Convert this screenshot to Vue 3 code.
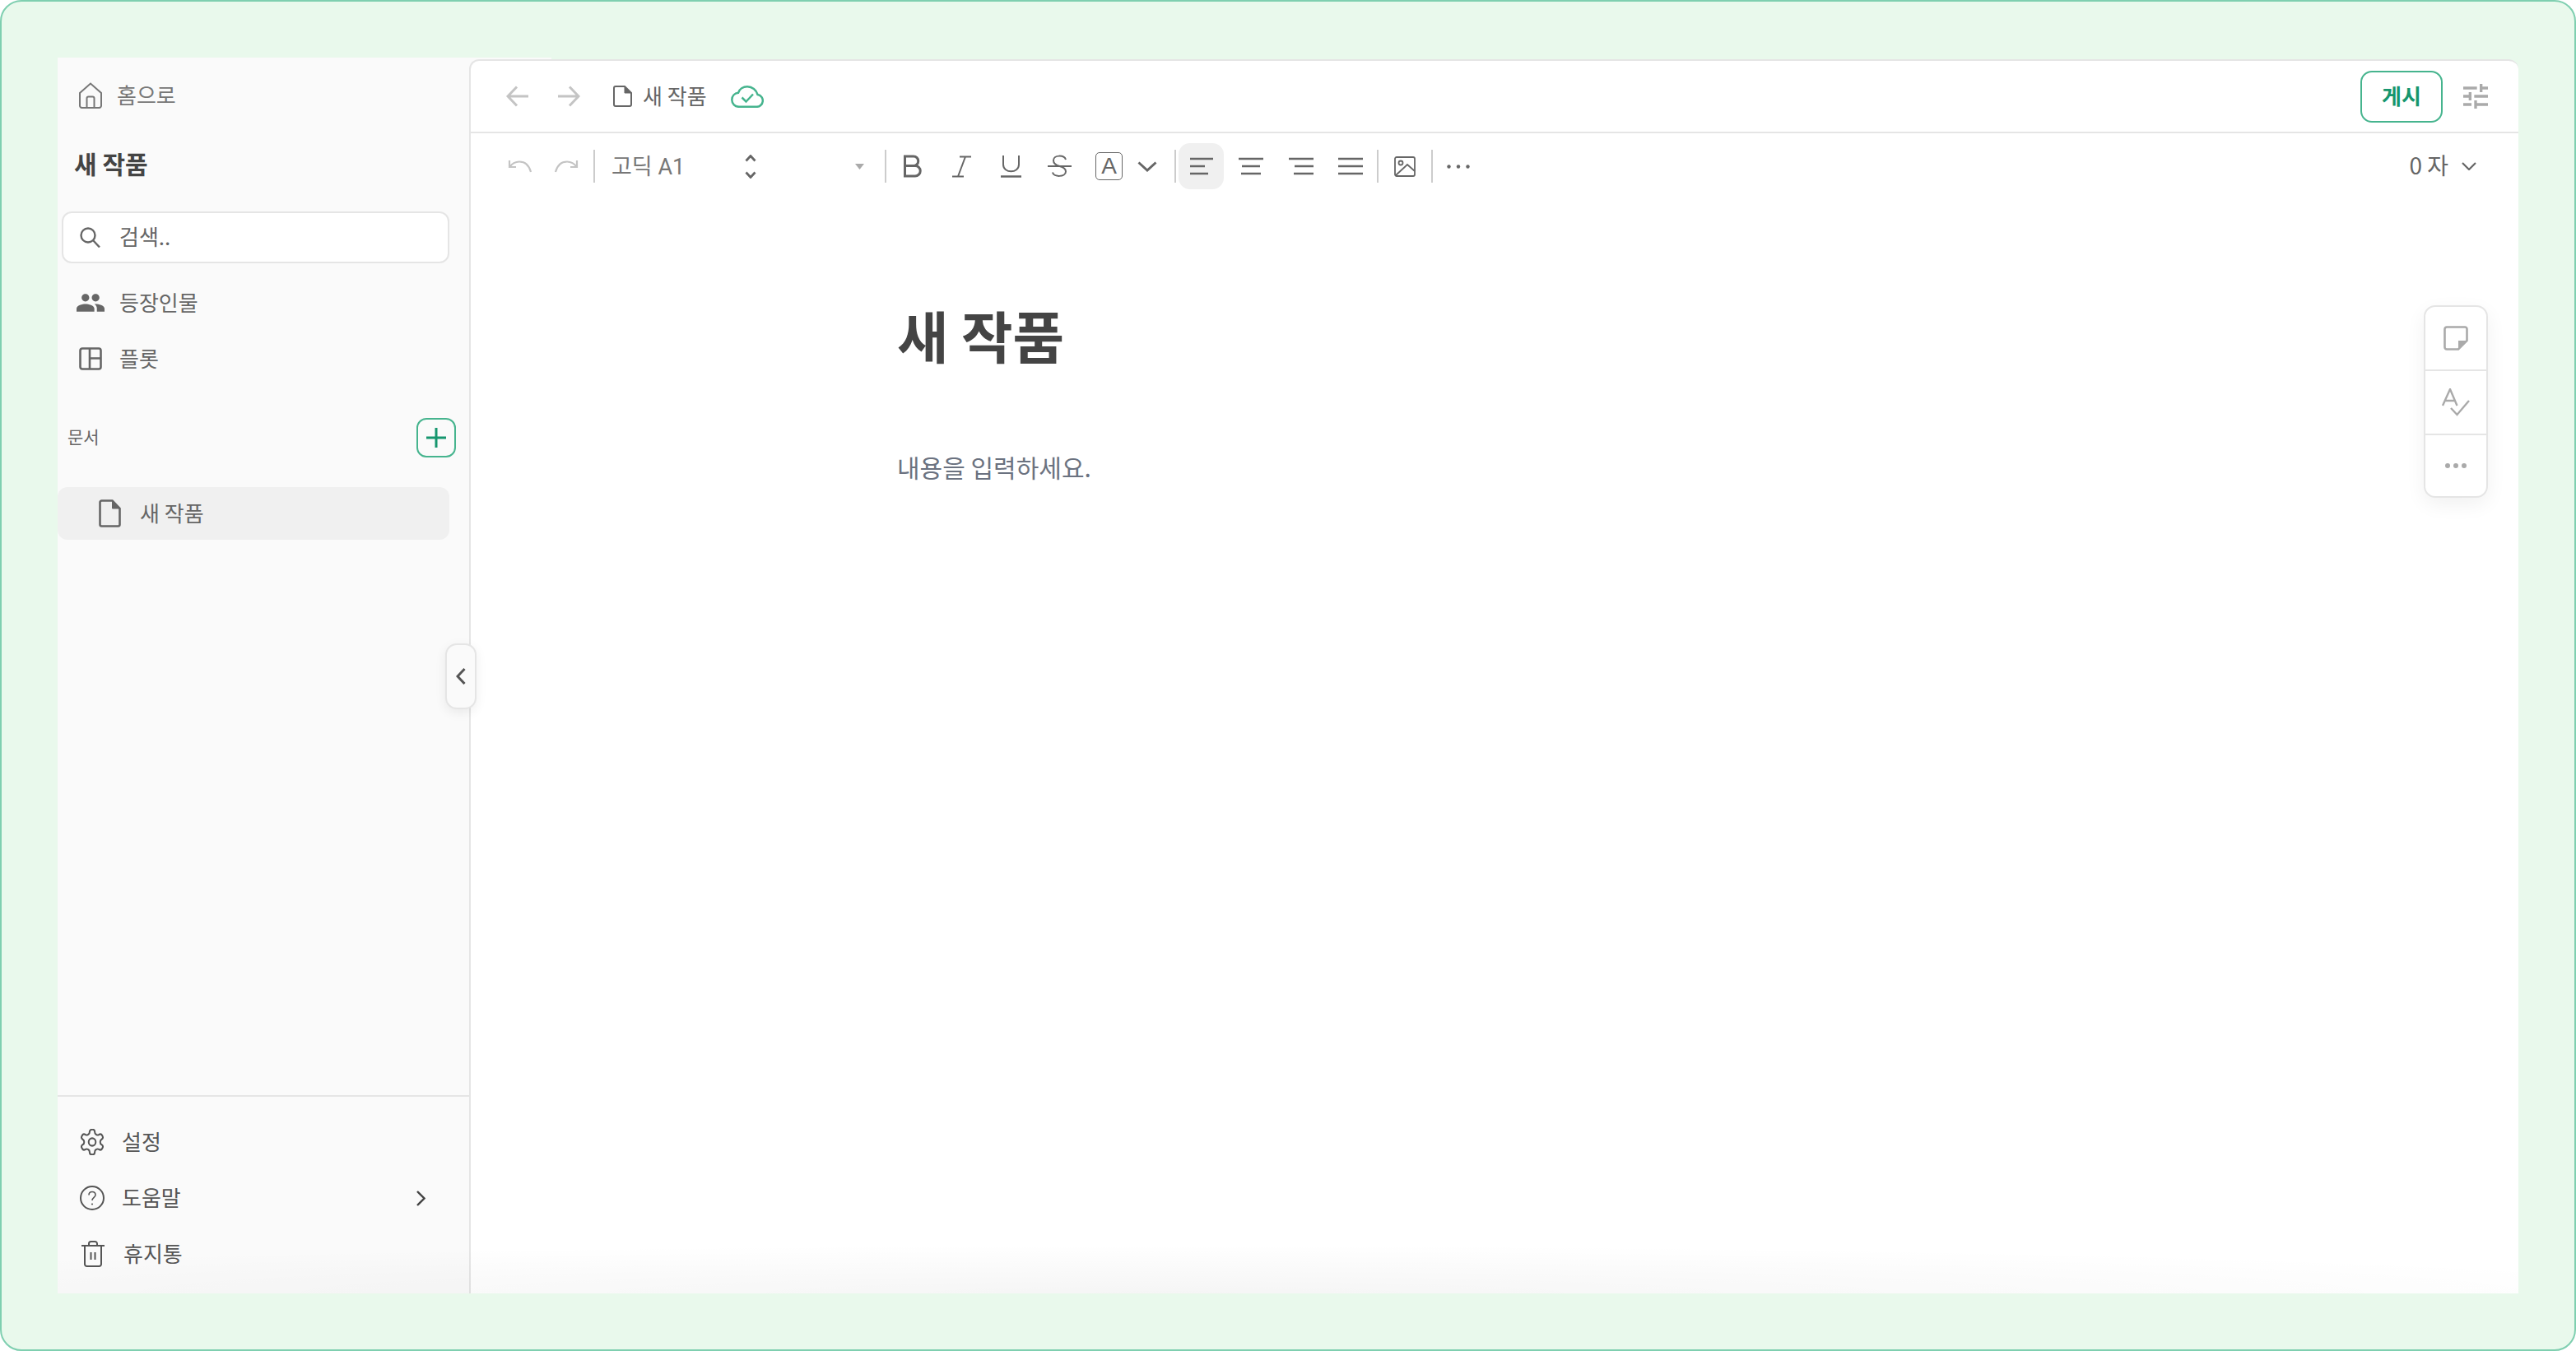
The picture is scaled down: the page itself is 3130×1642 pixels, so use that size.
<script setup>
const alignRows = [
  { name: 'left', on: true, d: 'M1 2h28M1 11h18M1 20h22' },
  { name: 'center', on: false, d: 'M0 2h30M4 11h22M3 20h24' },
  { name: 'right', on: false, d: 'M0 2h30M7 11h23M6 20h24' },
  { name: 'justify', on: false, d: 'M0 2h30M0 11h30M0 20h30' },
]
</script>

<template>
  <div class="window">
    <div class="frame">
      <aside class="sidebar">
        <div class="side-top">
          <a class="home">
            <svg width="30" height="32" viewBox="0 0 30 32" fill="none" stroke="#777" stroke-width="2"><path d="M2 13 15 1.500 28 13v15.500a2.500 2.500 0 0 1-2.500 2.500h-21A2.500 2.500 0 0 1 2 28.500zM10.500 31V19.500a2 2 0 0 1 2-2h5a2 2 0 0 1 2 2V31" /></svg>
            <span>홈으로</span>
          </a>
          <h2 class="work-name">새 작품</h2>
          <div class="search">
            <svg width="25" height="25" viewBox="0 0 25 25" fill="none" stroke="#666" stroke-width="2.400"><circle cx="10" cy="10" r="8.500" /><path d="m16 16 8 8.500" /></svg>
            <span>검색..</span>
          </div>
          <a class="nav-row chars">
            <svg width="34" height="22" viewBox="1 5 22 14" fill="#666"><path d="M16 11c1.660 0 2.990-1.340 2.990-3S17.660 5 16 5c-1.660 0-3 1.340-3 3s1.340 3 3 3zm-8 0c1.660 0 2.990-1.340 2.990-3S9.660 5 8 5C6.340 5 5 6.340 5 8s1.340 3 3 3zm0 2c-2.330 0-7 1.170-7 3.500V19h14v-2.500c0-2.330-4.670-3.500-7-3.500zm8 0c-.29 0-.62.020-.97.050 1.160.84 1.970 1.970 1.970 3.450V19h6v-2.500c0-2.330-4.670-3.500-7-3.500z" /></svg>
            <span>등장인물</span>
          </a>
          <a class="nav-row plot">
            <svg width="28" height="28" viewBox="0 0 28 28" fill="none" stroke="#666" stroke-width="2.600"><rect x="1.500" y="1.500" width="25" height="25" rx="2.500" /><path d="M13 2v24M13 13.500h13" /></svg>
            <span>플롯</span>
          </a>
        </div>

        <div class="doc-head">
          <span>문서</span>
          <button class="add-btn">
            <svg width="24" height="24" viewBox="0 0 24 24" fill="none" stroke="#16966e" stroke-width="3"><path d="M12 0v24M0 12h24" /></svg>
          </button>
        </div>
        <div class="doc-row">
          <svg width="27" height="34" viewBox="0 0 27 34" fill="none" stroke="#666" stroke-width="2.600"><path d="M3.500 1.500h13l9 9.500v19.500a2 2 0 0 1-2 2h-20a2 2 0 0 1-2-2v-27a2 2 0 0 1 2-2z" /><path d="M16.500 1.500V11h9z" fill="#666" stroke-width="1" /></svg>
          <span>새 작품</span>
        </div>

        <div class="side-foot">
          <a class="foot-row gear">
            <svg width="30" height="32" viewBox="1.500 1.500 21 21" fill="none" stroke="#555" stroke-width="1.400" preserveAspectRatio="none"><path d="M12.220 2h-.44a2 2 0 0 0-2 2v.18a2 2 0 0 1-1 1.730l-.43.25a2 2 0 0 1-2 0l-.15-.08a2 2 0 0 0-2.730.73l-.22.38a2 2 0 0 0 .73 2.730l.15.1a2 2 0 0 1 1 1.720v.51a2 2 0 0 1-1 1.740l-.15.09a2 2 0 0 0-.73 2.730l.22.38a2 2 0 0 0 2.730.73l.15-.08a2 2 0 0 1 2 0l.43.25a2 2 0 0 1 1 1.730V20a2 2 0 0 0 2 2h.44a2 2 0 0 0 2-2v-.18a2 2 0 0 1 1-1.730l.43-.25a2 2 0 0 1 2 0l.15.08a2 2 0 0 0 2.730-.73l.22-.39a2 2 0 0 0-.73-2.730l-.15-.08a2 2 0 0 1-1-1.740v-.5a2 2 0 0 1 1-1.740l.15-.09a2 2 0 0 0 .73-2.730l-.22-.38a2 2 0 0 0-2.730-.73l-.15.08a2 2 0 0 1-2 0l-.43-.25a2 2 0 0 1-1-1.730V4a2 2 0 0 0-2-2z" /><circle cx="12" cy="12" r="3" /></svg>
            <span>설정</span>
          </a>
          <a class="foot-row gear">
            <svg width="30" height="32" viewBox="0 0 30 32" fill="none" stroke="#555" stroke-width="2"><circle cx="15" cy="16" r="14" /><path d="M11 12.500c0-2.500 1.800-4 4-4s4 1.500 4 3.800c0 3-4 3.200-4 6.700" stroke-width="1.600" /><circle cx="15" cy="23.500" r="1.100" fill="#555" stroke="none" /></svg>
            <span>도움말</span>
            <svg class="more" width="11" height="19" viewBox="0 0 11 19" fill="none" stroke="#444" stroke-width="2.400"><path d="m1 1 8.500 8.500L1 18" /></svg>
          </a>
          <a class="foot-row trash">
            <svg width="28" height="32" viewBox="0 0 28 32" fill="none" stroke="#555" stroke-width="2"><path d="M0 6h28M4 6v22.500A2.500 2.500 0 0 0 6.500 31h15a2.500 2.500 0 0 0 2.500-2.500V6M9 6V3.500A2.500 2.500 0 0 1 11.500 1h5A2.500 2.500 0 0 1 19 3.500V6M11.500 14v9M16.500 14v9" /></svg>
            <span>휴지통</span>
          </a>
        </div>

        <button class="collapse">
          <svg width="12" height="20" viewBox="0 0 12 20" fill="none" stroke="#555" stroke-width="3"><path d="M10.500 1 2 10l8.500 9" /></svg>
        </button>
      </aside>

      <main class="main">
        <header class="topbar">
          <svg class="back" width="27" height="26" viewBox="0 0 27 26" fill="none" stroke="#c4c4c4" stroke-width="3"><path d="M27 13H2M13 1.500 2 13l11 11.500" /></svg>
          <svg class="forward" width="27" height="26" viewBox="0 0 27 26" fill="none" stroke="#c4c4c4" stroke-width="3"><path d="M0 13h25M14 1.500 25 13 14 24.500" /></svg>
          <svg class="file" width="23" height="26" viewBox="0 0 23 26" fill="none" stroke="#666" stroke-width="2"><path d="M3 1h11l8 8v14a2 2 0 0 1-2 2H3a2 2 0 0 1-2-2V3a2 2 0 0 1 2-2z" /><path d="M14 1v8h8z" fill="#666" stroke-width="1" /></svg>
          <span class="doc-title">새 작품</span>
          <svg class="cloud" width="40" height="27" viewBox="0 0 40 27" fill="none" stroke="#46b48e" stroke-width="2.500"><path d="M10 25.800h21a7.500 7.500 0 0 0 1.500-14.900C31 5.500 26 1.300 20 1.300c-5 0-9.500 3-11 7.500C4.500 9.500 1.300 13 1.300 17.300 1.300 22 5 25.800 10 25.800z" /><path d="m13.500 14.500 5 5 8.500-9" /></svg>
          <button class="publish">게시</button>
          <svg class="sliders" width="30" height="30" viewBox="3 3 18 18" fill="#aaa"><path d="M3 17v2h6v-2H3zM3 5v2h10V5H3zm10 16v-2h8v-2h-8v-2h-2v6h2zM7 9v2H3v2h4v2h2V9H7zm14 4v-2H11v2h10zm-6-4h2V7h4V5h-4V3h-2v6z" /></svg>
        </header>

        <div class="toolbar">
          <svg class="undo" width="30" height="17" viewBox="0 0 30 17" fill="none" stroke="#c4c4c4" stroke-width="2.200"><path d="M2 1v8h8M2 9c3-4 7-6.500 12-6.500 7 0 12 5 14 12.500" /></svg>
          <svg class="redo" width="30" height="17" viewBox="0 0 30 17" fill="none" stroke="#c4c4c4" stroke-width="2.200"><path d="M28 1v8h-8M28 9c-3-4-7-6.500-12-6.500-7 0-12 5-14 12.500" /></svg>
          <i class="sep s-hist"></i>
          <span class="font-name">고딕 A1</span>
          <svg class="updown" width="14" height="29" viewBox="0 0 14 29" fill="none" stroke="#666" stroke-width="2.800"><path d="m1.500 7.500 5.500-6 5.500 6M1.500 21.500l5.500 6 5.500-6" /></svg>
          <svg class="caret" width="11" height="7" viewBox="0 0 11 7" fill="#aaa"><path d="M0 0h11L5.500 7z" /></svg>
          <i class="sep s-font"></i>
          <svg class="t-b" width="24" height="28" viewBox="0 0 24 28" fill="none" stroke="#666" stroke-width="3"><path d="M2.500 2H13a5.700 5.700 0 0 1 0 11.500H2.500zM2.500 13.500H15A6.200 6.200 0 0 1 15 26H2.500z" /></svg>
          <svg class="t-i" width="23" height="27" viewBox="0 0 23 27" fill="none" stroke="#666" stroke-width="2"><path d="M9 1.500h14M0 25.500h14M16 1.500 7 25.500" /></svg>
          <svg class="t-u" width="27" height="28" viewBox="0 0 27 28" fill="none" stroke="#666" stroke-width="2"><path d="M4 1v11c0 11 19 11 19 0V1" /><path d="M1 26.500h25" stroke-width="2.400" /></svg>
          <svg class="t-s" width="29" height="28" viewBox="0 0 29 28" fill="none" stroke="#666" stroke-width="2"><path d="M0 14h29M22 6c-2-6-15-6-15 1 0 4 4 6 7.500 7 4 1 7.500 3 7.500 6.500 0 7-15 7-16 1" /></svg>
          <span class="t-a">A</span>
          <svg class="chev" width="24" height="13" viewBox="0 0 24 13" fill="none" stroke="#666" stroke-width="3"><path d="m1.500 1.500 10.500 9.500 10.500-9.500" /></svg>
          <i class="sep s-color"></i>
          <span v-for="row in alignRows" :key="row.name" class="align" :class="{ on: row.on }">
            <svg width="30" height="22" viewBox="0 0 30 22" fill="none" stroke="#666" stroke-width="2.400"><path :d="row.d" /></svg>
          </span>
          <i class="sep s-align"></i>
          <svg class="img" width="26" height="25" viewBox="0 0 26 25" fill="none" stroke="#666" stroke-width="1.800"><rect x="1" y="1" width="24" height="23" rx="2" /><circle cx="8" cy="8" r="2.500" /><path d="m2 23 14-13 9 8" /></svg>
          <i class="sep"></i>
          <svg class="dots" width="28" height="5" viewBox="0 0 28 5" fill="#666"><circle cx="2.500" cy="2.500" r="2.200" /><circle cx="14" cy="2.500" r="2.200" /><circle cx="25.500" cy="2.500" r="2.200" /></svg>
          <span class="count">0 자</span>
          <svg class="count-chev" width="18" height="10" viewBox="0 0 18 10" fill="none" stroke="#666" stroke-width="2.200"><path d="m1 1 8 8 8-8" /></svg>
        </div>

        <article class="page">
          <h1>새 작품</h1>
          <p>내용을 입력하세요.</p>
        </article>

        <div class="float-tools">
          <div class="float-cell">
            <svg width="30" height="30" viewBox="0 0 30 30" fill="none" stroke="#aaa" stroke-width="2.600"><path d="M18 28.500H4A2.500 2.500 0 0 1 1.500 26V4A2.500 2.500 0 0 1 4 1.500h22A2.500 2.500 0 0 1 28.500 4v14z" /><path d="M18 28.500V18h10.500z" fill="#aaa" stroke="none" /></svg>
          </div>
          <div class="float-cell">
            <svg width="34" height="34" viewBox="0 0 34 34" fill="none" stroke="#aaa" stroke-width="2.400"><path d="M1 21 10 1l8.500 20M4 15h12M11 24l7.500 8L33 15" /></svg>
          </div>
          <div class="float-cell">
            <svg width="26" height="6" viewBox="0 0 26 6" fill="#aaa"><circle cx="3" cy="3" r="3" /><circle cx="13" cy="3" r="3" /><circle cx="23" cy="3" r="3" /></svg>
          </div>
        </div>
      </main>
      <div class="bottom-fade"></div>
    </div>
  </div>
</template>

<style>
html, body {
  margin: 0;
  background: #fff;
}
</style>

<style scoped>
* {
  box-sizing: border-box;
}
.window {
  width: 3130px;
  height: 1642px;
  padding: 68px;
  background: #e9f9ec;
  border: 2px solid #7fcfb0;
  border-radius: 26px;
  font-family: "Noto Sans CJK KR", "Noto Sans", sans-serif;
  color: #666;
  overflow: hidden;
}
.frame {
  position: relative;
  display: flex;
  height: 100%;
  background: linear-gradient(to right, #fafafa 600px, transparent 600px);
}
.sidebar {
  position: relative;
  width: 500px;
  flex: none;
  display: flex;
  flex-direction: column;
}
.side-top {
  display: flex;
  flex-direction: column;
}
a {
  display: flex;
  align-items: center;
}
/* Noto sits a little low next to the icons */
a span,
.search span,
.doc-row span,
.doc-head span,
.doc-title,
.font-name,
.count {
  margin-bottom: 4px;
}
.home {
  height: 60px;
  margin-top: 16px;
  padding-left: 25px;
  gap: 17px;
  font-size: 26px;
  color: #777;
}
.work-name {
  margin: 32px 0 2px 20px;
  font-size: 30px;
  line-height: 40px;
  font-weight: 700;
  color: #444;
}
.search {
  display: flex;
  align-items: center;
  width: 471px;
  height: 63px;
  margin: 37px 0 0 5px;
  padding-left: 20px;
  gap: 23px;
  background: #fff;
  border: 2px solid #e5e5e5;
  border-radius: 12px;
  font-size: 26px;
  color: #666;
}
.nav-row {
  height: 68px;
  font-size: 26px;
  color: #666;
}
.chars {
  margin-top: 14px;
  padding-left: 23px;
  gap: 18px;
}
.plot {
  padding-left: 26px;
  gap: 21px;
}
.doc-head {
  display: flex;
  align-items: center;
  justify-content: space-between;
  height: 48px;
  margin-top: 38px;
  padding: 0 16px 0 12px;
  font-size: 21px;
  color: #666;
}
.add-btn {
  display: flex;
  align-items: center;
  justify-content: center;
  width: 48px;
  height: 48px;
  padding: 0;
  background: transparent;
  border: 2px solid #46b48e;
  border-radius: 12px;
}
.doc-row {
  display: flex;
  align-items: center;
  width: 476px;
  height: 64px;
  margin-top: 36px;
  padding-left: 50px;
  gap: 23px;
  background: #f0f0f0;
  border-radius: 12px;
  font-size: 26px;
  color: #666;
}
.side-foot {
  margin-top: auto;
  padding: 21px 0 14px;
  border-top: 2px solid #e5e5e5;
}
.foot-row {
  height: 68px;
  font-size: 26px;
  color: #555;
}
.gear {
  padding-left: 27px;
  gap: 21px;
}
.trash {
  padding-left: 29px;
  gap: 23px;
}
.more {
  margin-left: auto;
  margin-right: 53px;
}
.collapse {
  position: absolute;
  top: 712px;
  right: -9px;
  z-index: 2;
  display: flex;
  align-items: center;
  justify-content: center;
  width: 38px;
  height: 80px;
  padding: 0;
  background: #fafafa;
  border: 2px solid #e5e5e5;
  border-radius: 14px;
  box-shadow: 0 4px 14px rgba(0, 0, 0, .07);
}
.main {
  position: relative;
  flex: 1;
  display: flex;
  flex-direction: column;
  margin-top: 2px;
  background: #fff;
  border-left: 2px solid #e5e5e5;
  border-top: 2px solid #e5e5e5;
  border-radius: 12px 12px 0 0;
}
.topbar {
  display: flex;
  align-items: center;
  height: 88px;
  flex: none;
  padding-left: 43px;
  border-bottom: 2px solid #e5e5e5;
}
.forward {
  margin-left: 36px;
}
.file {
  margin-left: 40px;
}
.doc-title {
  margin-left: 13px;
  font-size: 26px;
  color: #666;
}
.cloud {
  margin-left: 29px;
}
.publish {
  margin-left: auto;
  width: 100px;
  height: 63px;
  padding: 0 0 3px;
  background: #fff;
  border: 2px solid #46b48e;
  border-radius: 14px;
  font: 700 26px "Noto Sans CJK KR", sans-serif;
  color: #16966e;
}
.sliders {
  margin-left: 25px;
  margin-right: 37px;
}
.toolbar {
  display: flex;
  align-items: center;
  height: 80px;
  flex: none;
  padding-left: 45px;
}
.redo {
  margin-left: 26px;
}
.sep {
  width: 2px;
  height: 40px;
  flex: none;
  background: #ccc;
}
.s-hist {
  margin-left: 18px;
}
.font-name {
  width: 162px;
  margin-left: 20px;
  flex: none;
  font-family: Roboto, "Noto Sans CJK KR", sans-serif;
  font-size: 27px;
  color: #777;
}
.updown {
  flex: none;
}
.caret {
  margin-left: 120px;
  flex: none;
}
.s-font {
  margin-left: 25px;
}
.t-b {
  margin-left: 20px;
}
.t-i {
  margin-left: 36px;
}
.t-u {
  margin-left: 35px;
}
.t-s {
  margin-left: 31px;
}
.t-a {
  display: flex;
  align-items: center;
  justify-content: center;
  width: 33px;
  height: 34px;
  margin-left: 29px;
  border: 1.500px solid #666;
  border-radius: 5px;
  font: 28px "Liberation Sans", sans-serif;
  color: #666;
}
.chev {
  margin-left: 18px;
}
.s-color {
  margin-left: 21px;
}
.align {
  display: flex;
  align-items: center;
  justify-content: center;
  width: 55px;
  height: 56px;
  margin-left: 5.500px;
  border-radius: 14px;
}
.s-color + .align {
  margin-left: 3px;
}
.align.on {
  background: #f0f0f0;
}
.s-align {
  margin-left: 4.500px;
}
.img {
  margin: 0 19.500px 0 18.500px;
}
.dots {
  margin-left: 17px;
}
.count {
  margin-left: auto;
  font-size: 28px;
  color: #666;
}
.count-chev {
  margin: 0 51px 0 16px;
}
.page {
  padding: 120px 0 0 518px;
}
.page h1 {
  margin: 0;
  font-size: 68px;
  line-height: 90px;
  font-weight: 700;
  color: #444;
}
.page p {
  margin: 95px 0 0;
  font-size: 30px;
  line-height: 40px;
  color: #6b7280;
}
.float-tools {
  position: absolute;
  top: 297px;
  right: 37px;
  width: 78px;
  background: #fff;
  border: 2px solid #e5e5e5;
  border-radius: 14px;
  box-shadow: 0 8px 24px rgba(0, 0, 0, .06);
}
.float-cell {
  display: flex;
  align-items: center;
  justify-content: center;
  height: 76px;
}
.float-cell + .float-cell {
  border-top: 2px solid #e5e5e5;
  height: 78px;
}
.float-cell:last-child {
  height: 76px;
}
.bottom-fade {
  position: absolute;
  left: 0;
  right: 0;
  bottom: 0;
  height: 60px;
  background: radial-gradient(65% 100% at 45% 100%, rgba(0, 0, 0, .04), rgba(0, 0, 0, 0));
  pointer-events: none;
}
</style>
